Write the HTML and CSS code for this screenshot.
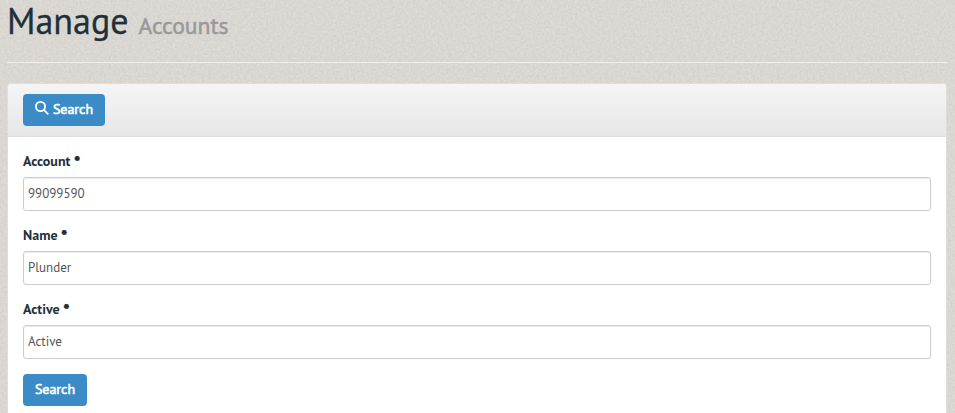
FILE: index.html
```html
<!DOCTYPE html>
<html lang="en">
<head>
<meta charset="utf-8">
<title>Manage Accounts</title>
<link rel="stylesheet" href="styles.css">
</head>
<body>
<svg class="texture" aria-hidden="true">
  <filter id="grain" x="0" y="0" width="100%" height="100%" color-interpolation-filters="sRGB">
    <feTurbulence type="fractalNoise" baseFrequency="0.45" numOctaves="2" seed="4"/>
    <feColorMatrix values="0.08 0 0 0 0.815  0.08 0 0 0 0.803  0.08 0 0 0 0.784  0 0 0 0 1"/>
  </filter>
  <rect width="100%" height="100%" filter="url(#grain)"/>
</svg>
<main class="page">
  <header class="page-header">
    <h1><span class="title">Manage</span><small>Accounts</small></h1>
  </header>
  <section class="panel">
    <div class="panel-heading">
      <button class="btn btn-filter" type="button">
        <svg class="icon" viewBox="0 0 14 14" aria-hidden="true"><circle cx="5.5" cy="5.5" r="4.6"/><path d="M8.9 8.9L13.3 13.3"/></svg>
        <span>Search</span>
      </button>
    </div>
    <form class="panel-body">
      <div class="form-group">
        <label for="account">Account <span class="required">*</span></label>
        <input id="account" type="text" value="99099590">
      </div>
      <div class="form-group">
        <label for="name">Name <span class="required">*</span></label>
        <input id="name" type="text" value="Plunder">
      </div>
      <div class="form-group">
        <label for="active">Active <span class="required">*</span></label>
        <input id="active" type="text" value="Active">
      </div>
      <button class="btn" type="button"><span>Search</span></button>
    </form>
  </section>
</main>
</body>
</html>
```
FILE: styles.css
```css
* { box-sizing: border-box; }
body {
  margin: 0;
  height: 413px;
  overflow: hidden;
  background: #dad7d1;
  color: #1f3039;
  font: 14px/20px "PT Sans", "Open Sans", "Noto Sans", sans-serif;
  font-stretch: 75%;
}
.texture { position: absolute; inset: 0; width: 100%; height: 100%; }
.page { position: relative; padding: 0 8px 0 7px; }
.page-header { height: 63px; border-bottom: 1px solid #f0efed; }
h1 {
  display: flex;
  align-items: baseline;
  gap: 10px;
  margin: 0;
  font-size: 36px;
  font-weight: 400;
  line-height: 42px;
}
h1 small { color: #999; font-size: 23.6px; -webkit-text-stroke: .5px #999; }
h1 .title { -webkit-text-stroke: .3px #1f3039; }
.panel {
  height: 345px;
  margin-top: 20px;
  border: 1px solid #ddd;
  border-radius: 4px;
  background: #fff;
}
.panel-heading {
  height: 53px;
  padding: 10px 15px;
  border-bottom: 1px solid #ddd;
  border-radius: 3px 3px 0 0;
  background: linear-gradient(#f5f5f5, #e7e7e7);
}
.panel-body { padding: 15px; }
.form-group { height: 74px; }
label { display: block; height: 25px; line-height: 19px; font-weight: 700; word-spacing: 1px; }
.required { -webkit-text-stroke: .9px #1f3039; }
input {
  display: block;
  width: 100%;
  height: 34px;
  padding: 4px 4px 5px;
  border: 1px solid #ccc;
  border-radius: 3px;
  outline: 0;
  background: #fff;
  box-shadow: inset 0 1px 1px rgba(0, 0, 0, .075);
  color: #555;
  font: inherit;
  font-size: 13px;
  font-stretch: 75%;
}
.btn {
  display: flex;
  justify-content: center;
  gap: 4px;
  width: 64px;
  height: 32px;
  padding: 6px 0;
  border: 0;
  border-radius: 4px;
  background: #3b8bc6;
  color: #fff;
  font: inherit;
  font-stretch: 75%;
  font-weight: 400;
  line-height: 19px;
  -webkit-text-stroke: .6px #fff;
}
.btn-filter { width: 82px; }
.icon { width: 14px; height: 14px; margin-top: 1px; fill: none; stroke: #fff; stroke-width: 1.8; }
```
